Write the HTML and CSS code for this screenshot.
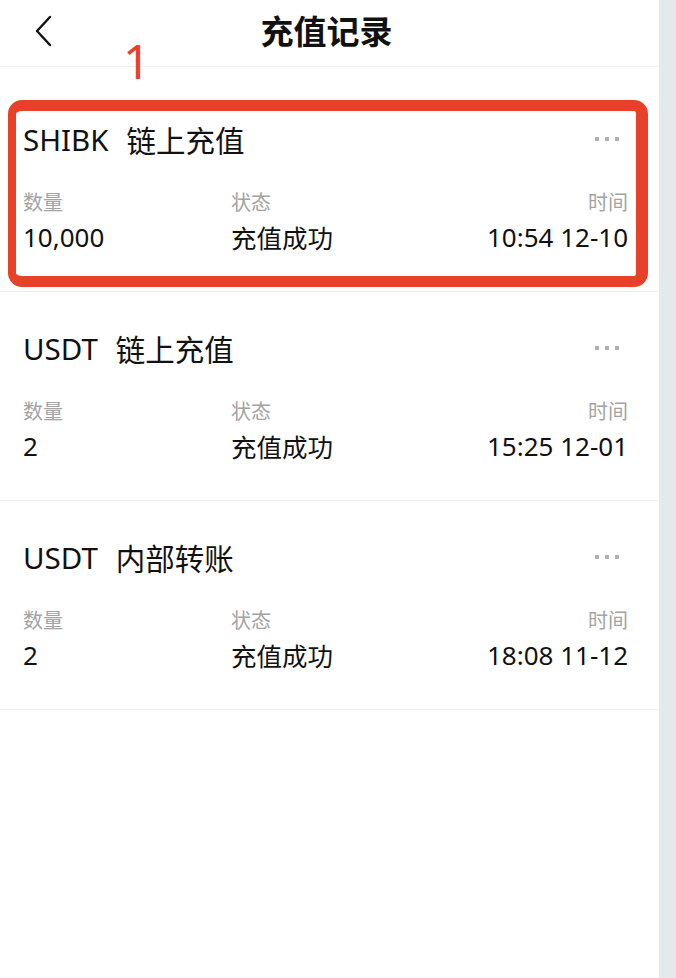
FILE: index.html
```html
<!DOCTYPE html>
<html lang="zh-CN">
<head>
  <meta charset="UTF-8">
  <meta name="viewport" content="width=device-width, initial-scale=1.0">
  <title>充值记录</title>
  <link rel="stylesheet" href="styles.css">
</head>
<body>
  <div class="page">
    <main class="screen">
      <!-- Header -->
      <header class="top-bar">
        <a class="back" href="#" aria-label="返回">
          <svg width="20" height="32" viewBox="0 0 20 32">
            <polyline points="16,2 3,16 16,30" fill="none" stroke="#111" stroke-width="2.4" stroke-linecap="round" stroke-linejoin="round"/>
          </svg>
        </a>
        <h1>充值记录</h1>
        <span></span>
      </header>

      <!-- Records -->
      <ul class="record-list">
        <li class="record">
          <div class="record-head">
            <span class="coin">SHIBK</span>
            <span class="kind">链上充值</span>
            <span class="more"><i></i><i></i><i></i></span>
          </div>
          <div class="record-meta">
            <span class="label">数量</span>
            <span class="label">状态</span>
            <span class="label right">时间</span>
            <span class="value">10,000</span>
            <span class="value cjk">充值成功</span>
            <span class="value right">10:54 12-10</span>
          </div>
        </li>
        <li class="record">
          <div class="record-head">
            <span class="coin">USDT</span>
            <span class="kind">链上充值</span>
            <span class="more"><i></i><i></i><i></i></span>
          </div>
          <div class="record-meta">
            <span class="label">数量</span>
            <span class="label">状态</span>
            <span class="label right">时间</span>
            <span class="value">2</span>
            <span class="value cjk">充值成功</span>
            <span class="value right">15:25 12-01</span>
          </div>
        </li>
        <li class="record">
          <div class="record-head">
            <span class="coin">USDT</span>
            <span class="kind">内部转账</span>
            <span class="more"><i></i><i></i><i></i></span>
          </div>
          <div class="record-meta">
            <span class="label">数量</span>
            <span class="label">状态</span>
            <span class="label right">时间</span>
            <span class="value">2</span>
            <span class="value cjk">充值成功</span>
            <span class="value right">18:08 11-12</span>
          </div>
        </li>
      </ul>

      <!-- Annotation -->
      <span class="mark-num">1</span>
      <div class="mark-box"></div>
    </main>
    <aside class="side-strip"></aside>
  </div>
</body>
</html>
```

FILE: styles.css
```css
/* Reset */
* {
  margin: 0;
  padding: 0;
  box-sizing: border-box;
}

body {
  font-family: "Noto Sans", "Noto Sans CJK SC", sans-serif;
  background-color: #fff;
  color: #111;
}

.page {
  display: flex;
  min-height: 100vh;
}

.screen {
  position: relative;
  flex: 1;
  background-color: #fff;
}

.side-strip {
  width: 17px;
  background-color: #e6e9ec;
}

/* Header */
.top-bar {
  display: grid;
  grid-template-columns: 1fr auto 1fr;
  align-items: center;
  height: 67px;
  border-bottom: 1px solid #f2f2f2;
}

.back {
  display: flex;
  padding-left: 34px;
  margin-top: -4px;
}

.top-bar h1 {
  font-family: "Noto Sans CJK SC", sans-serif;
  font-size: 33px;
  font-weight: 700;
  line-height: 40px;
  margin-top: -6px;
  margin-left: -6px;
}

/* Records */
.record-list {
  list-style: none;
  padding-top: 16px;
}

.record {
  padding: 38px 31px 37px 23px;
  border-bottom: 1px solid #f0f0f0;
}

.record-head {
  display: flex;
  align-items: center;
  height: 38px;
  font-size: 29.5px;
  margin-top: -1px;
  margin-bottom: 1px;
}

.kind {
  font-family: "Noto Sans CJK SC", sans-serif;
  margin-left: 18px;
}

.more {
  display: flex;
  gap: 6px;
  margin-left: auto;
  margin-right: 9px;
}

.more i {
  width: 4px;
  height: 4px;
  background-color: #b0b0b0;
}

.record-meta {
  display: grid;
  grid-template-columns: 208px 1fr auto;
  margin-top: 30px;
  row-gap: 4px;
}

.label {
  font-family: "Noto Sans CJK SC", sans-serif;
  font-size: 20px;
  line-height: 28px;
  color: #a3a3a3;
}

.value {
  font-size: 26px;
  line-height: 34px;
  color: #111;
}

.value.cjk {
  font-family: "Noto Sans CJK SC", sans-serif;
  font-size: 25.5px;
}

.right {
  text-align: right;
}

/* Annotation overlay */
.mark-num {
  position: absolute;
  left: 123px;
  top: 37px;
  font-size: 48px;
  font-weight: 400;
  line-height: 1;
  color: #e8412a;
}

.mark-box {
  position: absolute;
  left: 8px;
  top: 100px;
  width: 640px;
  height: 187px;
  border: 11px solid #e8412a;
  border-left-width: 8px;
  border-right-width: 12px;
  border-radius: 14px;
}
```
